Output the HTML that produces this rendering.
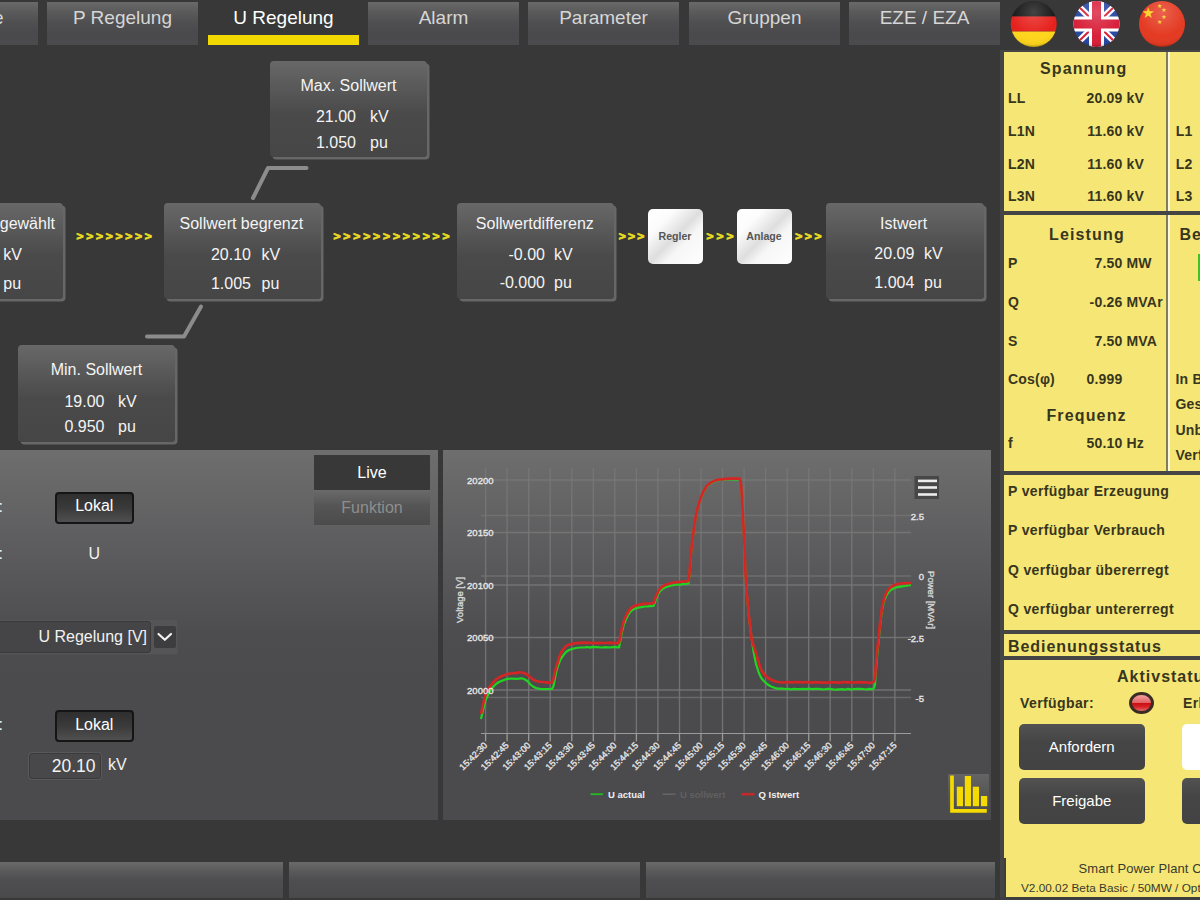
<!DOCTYPE html>
<html lang="de"><head><meta charset="utf-8"><title>U Regelung</title>
<style>
html,body{margin:0;padding:0}
body{width:1200px;height:900px;overflow:hidden;position:relative;background:#383838;font-family:"Liberation Sans",sans-serif;color:#f2f2f2}
.abs,.tab,.bx,.bx div,.arw,.arw span,.p,.p div,.btn,.y,.y div{position:absolute}
.tab{top:2px;width:151px;height:43px;line-height:32px;text-align:center;font-size:19px;color:#d6d6d6;background:linear-gradient(#696969,#5b5b5c 22%,#4f4f51 48%,#4a4a4c 72%,#4b4b4d)}
.tab.act{background:none;color:#fff}
.tab.act i{position:absolute;left:0;right:0;top:33px;height:10px;background:#f0d800}
.bx{border-radius:4px;background:linear-gradient(#686868,#4a4a4a 55%,#464646);box-shadow:2.5px 2.5px 0 #676767;font-size:16px;color:#f4f4f4;white-space:nowrap}
.bt{left:0;right:0;text-align:center;line-height:20px}
.bn,.bu{line-height:20px;font-size:16px}
.arw{left:0;height:16px;width:1000px;transform:scaleY(.85);transform-origin:0 8.6px}
.arw span{top:0;font-weight:bold;font-size:12px;line-height:16px;color:#e8da22;-webkit-text-stroke:.9px #e8da22}
.wb{position:absolute;width:55px;height:55px;border-radius:5px;background:linear-gradient(135deg,#fff 0%,#fcfcfc 25%,#dedede 50%,#f6f6f6 64%,#fff 100%);color:#555;font-weight:bold;font-size:10.6px;line-height:55px;text-align:center}
.p{background:linear-gradient(#6e6e6e,#5c5c5e 27%,#4d4d4f 50%,#4b4b4d 62%,#4b4b4d)}
.btn{border:2px solid #151515;border-radius:4px;background:linear-gradient(#2f2f2f,#3a3a3a 50%,#505050);color:#fff;font-size:16px;text-align:center;box-sizing:border-box}
.y{color:#38361c;font-weight:bold;font-size:14px;white-space:nowrap;letter-spacing:.2px}
.y .h{font-size:16px;letter-spacing:1.15px}
.y .r{text-align:right}
.dk{position:absolute;background:#454545}
.db{position:absolute;border-radius:5px;background:linear-gradient(#525252,#454545 40%,#434343);color:#fff;font-size:15px;text-align:center}
</style></head><body>
<div class="tab" style="left:-114px;text-align:right;width:117.5px;padding-right:34.3px">Zentrale</div><div class="tab" style="left:47px">P Regelung</div><div class="tab act" style="left:208px">U Regelung<i></i></div><div class="tab" style="left:368px">Alarm</div><div class="tab" style="left:528px">Parameter</div><div class="tab" style="left:689px">Gruppen</div><div class="tab" style="left:849px">EZE / EZA</div>
<!-- flags -->
<svg class="abs" style="left:1004px;top:0" width="196" height="50" viewBox="1004 0 196 50">
<defs>
<clipPath id="c1"><circle cx="1033.7" cy="24" r="23"/></clipPath>
<clipPath id="c2"><circle cx="1096.5" cy="24" r="23"/></clipPath>
<clipPath id="c3"><circle cx="1162" cy="24" r="23"/></clipPath>
<radialGradient id="gl" cx=".5" cy=".25" r=".75"><stop offset="0" stop-color="#fff" stop-opacity=".2"/><stop offset=".7" stop-color="#fff" stop-opacity="0"/><stop offset=".93" stop-color="#000" stop-opacity=".05"/><stop offset="1" stop-color="#000" stop-opacity=".3"/></radialGradient>
</defs>
<g clip-path="url(#c1)"><rect x="1010" y="0" width="48" height="16.5" fill="#151515"/><rect x="1010" y="16.5" width="48" height="15" fill="#e6201c"/><rect x="1010" y="31.5" width="48" height="17" fill="#ffd61c"/></g>
<circle cx="1033.7" cy="24" r="23" fill="url(#gl)"/>
<g clip-path="url(#c2)"><rect x="1073" y="0" width="48" height="48" fill="#2848a4"/>
<path d="M1073 1 L1120 47 M1120 1 L1073 47" stroke="#fff" stroke-width="6.5"/>
<path d="M1073 1 L1120 47 M1120 1 L1073 47" stroke="#d8203a" stroke-width="2"/>
<path d="M1096.5 0 V48 M1073 24 H1120" stroke="#fff" stroke-width="15"/>
<path d="M1096.5 0 V48 M1073 24 H1120" stroke="#d8203a" stroke-width="9"/></g>
<circle cx="1096.5" cy="24" r="23" fill="url(#gl)"/>
<g clip-path="url(#c3)"><rect x="1139" y="0" width="48" height="48" fill="#e43a22"/>
<text x="1148.3" y="18" text-anchor="middle" font-size="15" fill="#f8d020" font-family="DejaVu Sans,sans-serif">★</text>
<text x="1159.7" y="7.5" text-anchor="middle" font-size="6" fill="#f8d020" font-family="DejaVu Sans,sans-serif">★</text>
<text x="1164" y="12.2" text-anchor="middle" font-size="6" fill="#f8d020" font-family="DejaVu Sans,sans-serif">★</text>
<text x="1164" y="18.9" text-anchor="middle" font-size="6" fill="#f8d020" font-family="DejaVu Sans,sans-serif">★</text>
<text x="1159.7" y="23.5" text-anchor="middle" font-size="6" fill="#f8d020" font-family="DejaVu Sans,sans-serif">★</text></g>
<circle cx="1162" cy="24" r="23" fill="url(#gl)"/>
</svg>

<!-- diagram -->
<svg class="abs" style="left:0;top:0" width="1000" height="450"><path d="M306.5 168 H268 L253 198" fill="none" stroke="#8c8c8c" stroke-width="4" stroke-linecap="round" stroke-linejoin="round"/><path d="M201 306.5 L184 336.5 H147" fill="none" stroke="#8c8c8c" stroke-width="4" stroke-linecap="round" stroke-linejoin="round"/></svg>
<div class="bx" style="left:270px;top:61px;width:157px;height:96px">
<div class="bt" style="top:14.600000000000001px;left:0px;right:0px">Max. Sollwert</div>
<div class="bn" style="top:46.3px;right:71px">21.00</div><div class="bu" style="top:46.3px;left:100px">kV</div>
<div class="bn" style="top:72.1px;right:71px">1.050</div><div class="bu" style="top:72.1px;left:100px">pu</div>
</div>
<div class="bx" style="left:-95px;top:203px;width:157.5px;height:96px">
<div class="bt" style="top:11.3px;left:0px;right:0px">Sollwert ausgewählt</div>
<div class="bn" style="top:42px;right:71.5px">20.10</div><div class="bu" style="top:42px;left:98.3px">kV</div>
<div class="bn" style="top:70.5px;right:71.5px">1.005</div><div class="bu" style="top:70.5px;left:98.3px">pu</div>
</div>
<div class="bx" style="left:164px;top:203px;width:157px;height:96px">
<div class="bt" style="top:10.8px;left:-1.2px;right:1.2px">Sollwert begrenzt</div>
<div class="bn" style="top:42px;right:70px">20.10</div><div class="bu" style="top:42px;left:97.6px">kV</div>
<div class="bn" style="top:70.5px;right:70px">1.005</div><div class="bu" style="top:70.5px;left:97.6px">pu</div>
</div>
<div class="bx" style="left:457px;top:203px;width:157px;height:96px">
<div class="bt" style="top:11px;left:-0.7px;right:0.7px">Sollwertdifferenz</div>
<div class="bn" style="top:42px;right:69px">-0.00</div><div class="bu" style="top:42px;left:97px">kV</div>
<div class="bn" style="top:70.4px;right:69px">-0.000</div><div class="bu" style="top:70.4px;left:97px">pu</div>
</div>
<div class="bx" style="left:826px;top:203px;width:157.5px;height:96px">
<div class="bt" style="top:10.899999999999999px;left:-1.2px;right:1.2px">Istwert</div>
<div class="bn" style="top:41px;right:69.1px">20.09</div><div class="bu" style="top:41px;left:98px">kV</div>
<div class="bn" style="top:69.6px;right:69.1px">1.004</div><div class="bu" style="top:69.6px;left:98px">pu</div>
</div>
<div class="bx" style="left:18px;top:345px;width:157px;height:96.5px">
<div class="bt" style="top:14.8px;left:0px;right:0px">Min. Sollwert</div>
<div class="bn" style="top:47.2px;right:70.5px">19.00</div><div class="bu" style="top:47.2px;left:100px">kV</div>
<div class="bn" style="top:72.2px;right:70.5px">0.950</div><div class="bu" style="top:72.2px;left:100px">pu</div>
</div>
<div class="arw" style="top:229px"><span style="left:76.6px">&gt;</span><span style="left:86.3px">&gt;</span><span style="left:96.1px">&gt;</span><span style="left:105.8px">&gt;</span><span style="left:115.6px">&gt;</span><span style="left:125.3px">&gt;</span><span style="left:135.1px">&gt;</span><span style="left:144.8px">&gt;</span></div>
<div class="arw" style="top:229px"><span style="left:333.4px">&gt;</span><span style="left:343.3px">&gt;</span><span style="left:353.2px">&gt;</span><span style="left:363.2px">&gt;</span><span style="left:373.1px">&gt;</span><span style="left:383.0px">&gt;</span><span style="left:392.9px">&gt;</span><span style="left:402.8px">&gt;</span><span style="left:412.7px">&gt;</span><span style="left:422.7px">&gt;</span><span style="left:432.6px">&gt;</span><span style="left:442.5px">&gt;</span></div>
<div class="arw" style="top:229px"><span style="left:618.8px">&gt;</span><span style="left:628.0px">&gt;</span><span style="left:637.2px">&gt;</span></div>
<div class="arw" style="top:229px"><span style="left:706.4px">&gt;</span><span style="left:716.4px">&gt;</span><span style="left:726.4px">&gt;</span></div>
<div class="arw" style="top:229px"><span style="left:795.2px">&gt;</span><span style="left:804.8px">&gt;</span><span style="left:814.4px">&gt;</span></div>
<div class="wb" style="left:647.5px;top:209px">Regler</div>
<div class="wb" style="left:736.5px;top:209px">Anlage</div>

<!-- lower-left panel -->
<div class="p" style="left:0;top:450px;width:437.5px;height:370px">
<div style="left:314px;top:5px;width:116px;height:34.5px;background:#383838;color:#fff;font-size:16px;line-height:36px;text-align:center">Live</div>
<div style="left:314px;top:40px;width:116px;height:34.5px;background:linear-gradient(#6a6a6a,#555 45%,#4b4b4b);color:#8e8e8e;font-size:16px;line-height:35px;text-align:center">Funktion</div>
<div style="left:-78.9px;top:47.3px;font-size:16px;line-height:20px">Betriebsart:</div>
<div class="btn" style="left:55px;top:41.5px;width:78.5px;height:32px;line-height:24.5px">Lokal</div>
<div style="left:-85.1px;top:94px;font-size:16px;line-height:20px">Regelgröße:</div>
<div style="left:84.4px;top:94px;width:20px;text-align:center;font-size:16px;line-height:20px">U</div>
<div style="left:-20px;top:169.5px;width:197px;height:34.5px;background:#555557;box-shadow:0 0 0 1px #505052"></div>
<div style="left:-20px;top:171px;width:171px;height:32px;box-sizing:border-box;border:1px solid #3a3a3a;border-radius:3px;background:#454547;font-size:16px;line-height:30px;text-align:right;padding-right:3px">U Regelung [V]</div>
<div style="left:154px;top:176px;width:21.5px;height:21.5px;background:#3d3d3f;border-radius:2px"></div>
<svg class="abs" style="left:154px;top:176px" width="22" height="22"><path d="M4.5 8 L10.8 13.8 L17 8" fill="none" stroke="#f2f2f2" stroke-width="2.2" stroke-linecap="round" stroke-linejoin="round"/></svg>
<div style="left:-101.2px;top:265.4px;font-size:16px;line-height:20px">Sollwertquelle:</div>
<div class="btn" style="left:55px;top:260px;width:78.5px;height:32px;line-height:26px">Lokal</div>
<div style="left:29px;top:303px;width:72px;height:26px;box-sizing:border-box;border:1px solid #3b3b3b;border-radius:3px;background:#48484a;font-size:17.5px;line-height:24.5px;text-align:right;padding-right:4.5px;box-shadow:0 0 0 1px #58585a">20.10</div>
<div style="left:108px;top:305px;font-size:16px;line-height:20px">kV</div>
</div>

<!-- chart panel -->
<div class="p" style="left:443px;top:450px;width:548px;height:370px"></div>
<svg class="abs" style="left:443px;top:450px" width="548" height="370" viewBox="0 0 548 370">
<style>.ct{font:bold 9.5px "Liberation Sans",sans-serif;fill:#e4e4e4}.cl{font:9.5px "Liberation Sans",sans-serif;fill:#e6e6e6;stroke:#e6e6e6;stroke-width:.35px}</style>
<line x1="42.6" y1="18" x2="42.6" y2="283.5" stroke="#787878" stroke-width="1.4" opacity=".85"/><line x1="42.6" y1="283.5" x2="42.6" y2="291.3" stroke="#9a9a9a" stroke-width="1.3"/><line x1="64.1" y1="18" x2="64.1" y2="283.5" stroke="#787878" stroke-width="1.4" opacity=".85"/><line x1="64.1" y1="283.5" x2="64.1" y2="291.3" stroke="#9a9a9a" stroke-width="1.3"/><line x1="85.7" y1="18" x2="85.7" y2="283.5" stroke="#787878" stroke-width="1.4" opacity=".85"/><line x1="85.7" y1="283.5" x2="85.7" y2="291.3" stroke="#9a9a9a" stroke-width="1.3"/><line x1="107.2" y1="18" x2="107.2" y2="283.5" stroke="#787878" stroke-width="1.4" opacity=".85"/><line x1="107.2" y1="283.5" x2="107.2" y2="291.3" stroke="#9a9a9a" stroke-width="1.3"/><line x1="128.8" y1="18" x2="128.8" y2="283.5" stroke="#787878" stroke-width="1.4" opacity=".85"/><line x1="128.8" y1="283.5" x2="128.8" y2="291.3" stroke="#9a9a9a" stroke-width="1.3"/><line x1="150.3" y1="18" x2="150.3" y2="283.5" stroke="#787878" stroke-width="1.4" opacity=".85"/><line x1="150.3" y1="283.5" x2="150.3" y2="291.3" stroke="#9a9a9a" stroke-width="1.3"/><line x1="171.8" y1="18" x2="171.8" y2="283.5" stroke="#787878" stroke-width="1.4" opacity=".85"/><line x1="171.8" y1="283.5" x2="171.8" y2="291.3" stroke="#9a9a9a" stroke-width="1.3"/><line x1="193.4" y1="18" x2="193.4" y2="283.5" stroke="#787878" stroke-width="1.4" opacity=".85"/><line x1="193.4" y1="283.5" x2="193.4" y2="291.3" stroke="#9a9a9a" stroke-width="1.3"/><line x1="214.9" y1="18" x2="214.9" y2="283.5" stroke="#787878" stroke-width="1.4" opacity=".85"/><line x1="214.9" y1="283.5" x2="214.9" y2="291.3" stroke="#9a9a9a" stroke-width="1.3"/><line x1="236.5" y1="18" x2="236.5" y2="283.5" stroke="#787878" stroke-width="1.4" opacity=".85"/><line x1="236.5" y1="283.5" x2="236.5" y2="291.3" stroke="#9a9a9a" stroke-width="1.3"/><line x1="258.0" y1="18" x2="258.0" y2="283.5" stroke="#787878" stroke-width="1.4" opacity=".85"/><line x1="258.0" y1="283.5" x2="258.0" y2="291.3" stroke="#9a9a9a" stroke-width="1.3"/><line x1="279.5" y1="18" x2="279.5" y2="283.5" stroke="#787878" stroke-width="1.4" opacity=".85"/><line x1="279.5" y1="283.5" x2="279.5" y2="291.3" stroke="#9a9a9a" stroke-width="1.3"/><line x1="301.1" y1="18" x2="301.1" y2="283.5" stroke="#787878" stroke-width="1.4" opacity=".85"/><line x1="301.1" y1="283.5" x2="301.1" y2="291.3" stroke="#9a9a9a" stroke-width="1.3"/><line x1="322.6" y1="18" x2="322.6" y2="283.5" stroke="#787878" stroke-width="1.4" opacity=".85"/><line x1="322.6" y1="283.5" x2="322.6" y2="291.3" stroke="#9a9a9a" stroke-width="1.3"/><line x1="344.2" y1="18" x2="344.2" y2="283.5" stroke="#787878" stroke-width="1.4" opacity=".85"/><line x1="344.2" y1="283.5" x2="344.2" y2="291.3" stroke="#9a9a9a" stroke-width="1.3"/><line x1="365.7" y1="18" x2="365.7" y2="283.5" stroke="#787878" stroke-width="1.4" opacity=".85"/><line x1="365.7" y1="283.5" x2="365.7" y2="291.3" stroke="#9a9a9a" stroke-width="1.3"/><line x1="387.2" y1="18" x2="387.2" y2="283.5" stroke="#787878" stroke-width="1.4" opacity=".85"/><line x1="387.2" y1="283.5" x2="387.2" y2="291.3" stroke="#9a9a9a" stroke-width="1.3"/><line x1="408.8" y1="18" x2="408.8" y2="283.5" stroke="#787878" stroke-width="1.4" opacity=".85"/><line x1="408.8" y1="283.5" x2="408.8" y2="291.3" stroke="#9a9a9a" stroke-width="1.3"/><line x1="430.3" y1="18" x2="430.3" y2="283.5" stroke="#787878" stroke-width="1.4" opacity=".85"/><line x1="430.3" y1="283.5" x2="430.3" y2="291.3" stroke="#9a9a9a" stroke-width="1.3"/><line x1="451.9" y1="18" x2="451.9" y2="283.5" stroke="#787878" stroke-width="1.4" opacity=".85"/><line x1="451.9" y1="283.5" x2="451.9" y2="291.3" stroke="#9a9a9a" stroke-width="1.3"/><line x1="38" y1="30.0" x2="468" y2="30.0" stroke="#787878" stroke-width="1.4" opacity=".85"/><line x1="38" y1="82.5" x2="468" y2="82.5" stroke="#787878" stroke-width="1.4" opacity=".85"/><line x1="38" y1="135.0" x2="468" y2="135.0" stroke="#787878" stroke-width="1.4" opacity=".85"/><line x1="38" y1="187.5" x2="468" y2="187.5" stroke="#787878" stroke-width="1.4" opacity=".85"/><line x1="38" y1="240.0" x2="468" y2="240.0" stroke="#787878" stroke-width="1.4" opacity=".85"/><line x1="38" y1="65.5" x2="468" y2="65.5" stroke="#777" stroke-width="1.4" opacity=".7"/><line x1="38" y1="126.0" x2="468" y2="126.0" stroke="#777" stroke-width="1.4" opacity=".7"/><line x1="38" y1="247.5" x2="468" y2="247.5" stroke="#777" stroke-width="1.4" opacity=".7"/><line x1="38" y1="283.5" x2="468" y2="283.5" stroke="#9a9a9a" stroke-width="1.2"/>
<path d="M38.0 269.0 L40.0 260.0 L42.5 250.5 L45.0 245.0 L47.0 241.0 L50.0 237.0 L53.0 234.0 L56.0 232.0 L59.0 230.7 L64.7 228.8 L69.0 228.5 L73.0 228.8 L75.9 228.6 L78.7 228.3 L81.0 229.0 L84.5 231.0 L87.0 234.0 L90.0 236.5 L93.0 238.0 L97.0 238.8 L100.0 239.2 L103.0 239.2 L106.0 239.0 L109.0 239.0 L110.5 236.0 L112.0 228.0 L113.7 220.0 L116.0 213.0 L118.0 208.5 L120.5 205.0 L123.0 202.0 L126.0 200.0 L129.0 199.0 L133.0 198.0 L137.0 197.5 L139.5 197.5 L142.0 197.3 L144.5 197.0 L147.0 197.6 L149.5 196.9 L152.0 197.2 L154.5 197.0 L157.0 197.5 L159.5 197.5 L162.0 197.2 L164.5 197.3 L167.0 197.5 L169.5 197.1 L172.0 197.2 L176.0 197.5 L177.5 190.0 L179.0 181.7 L181.0 174.0 L183.7 167.7 L186.0 163.5 L188.3 160.7 L191.5 158.8 L195.3 157.6 L202.0 156.5 L204.8 156.4 L207.7 156.1 L210.5 156.0 L212.0 152.0 L214.0 146.7 L216.0 142.5 L218.7 139.7 L222.0 137.5 L225.7 136.2 L230.0 135.2 L232.5 134.6 L235.0 134.5 L237.5 134.6 L240.0 134.0 L242.8 134.0 L245.5 133.5 L246.5 125.0 L247.8 107.0 L249.5 90.0 L251.3 76.7 L253.0 66.0 L254.8 58.0 L257.5 49.0 L260.7 41.7 L264.0 36.5 L267.7 33.5 L272.0 31.3 L277.0 30.0 L279.5 29.5 L282.0 29.5 L284.6 29.5 L287.3 29.3 L290.4 29.3 L293.4 29.6 L296.5 29.2 L297.6 31.5 L298.3 38.5 L299.0 48.5 L300.3 73.5 L301.5 95.5 L302.5 125.7 L304.2 148.0 L306.0 167.7 L308.0 184.0 L310.7 202.5 L313.0 214.0 L315.7 222.5 L318.0 227.5 L320.7 231.0 L324.0 234.0 L327.0 236.0 L332.0 238.0 L334.5 238.6 L337.0 238.7 L339.5 238.6 L342.0 239.0 L345.0 238.9 L348.0 239.4 L351.0 238.8 L354.0 239.2 L357.0 239.1 L360.0 238.8 L363.0 239.2 L366.0 238.7 L369.0 239.1 L372.0 238.8 L375.0 238.8 L378.0 239.1 L381.0 239.5 L384.0 238.8 L387.0 238.9 L390.0 239.3 L393.0 239.6 L396.0 239.3 L399.0 239.1 L402.0 239.7 L405.0 238.7 L408.0 239.6 L411.0 239.0 L414.0 238.8 L417.0 238.8 L420.0 239.0 L423.0 239.5 L426.0 238.9 L429.5 239.2 L431.0 238.0 L432.0 235.0 L433.0 220.0 L434.2 205.0 L435.7 190.0 L437.3 174.0 L439.0 160.0 L441.3 150.0 L443.7 144.8 L447.0 140.5 L450.7 138.2 L454.0 137.2 L457.7 136.6 L462.0 136.0 L468.0 135.0" fill="none" stroke="#22d422" stroke-width="2.2" stroke-linejoin="round"/>
<path d="M38.0 264.0 L40.0 254.5 L42.5 244.7 L45.0 240.0 L47.0 236.5 L50.0 232.5 L53.0 229.5 L56.0 227.5 L59.0 226.0 L64.7 224.0 L71.0 223.0 L73.6 223.1 L76.1 222.4 L78.7 222.5 L81.5 223.3 L84.5 224.8 L87.0 227.0 L90.0 229.5 L93.0 231.0 L97.0 231.8 L100.0 232.0 L103.0 232.3 L106.0 232.6 L109.0 232.5 L110.5 229.0 L112.0 222.0 L113.7 215.5 L116.0 208.0 L118.0 202.7 L120.5 199.0 L123.0 196.0 L126.0 194.6 L129.0 193.8 L133.0 193.2 L137.0 192.9 L139.6 192.7 L142.2 192.9 L144.8 192.6 L147.4 193.0 L150.0 193.1 L152.6 192.9 L155.2 193.1 L157.8 192.8 L160.4 193.0 L163.0 193.0 L165.6 192.9 L168.2 192.9 L170.8 193.1 L173.4 193.2 L176.0 192.9 L177.5 186.0 L179.0 178.0 L181.0 170.5 L183.7 164.5 L186.0 160.5 L188.3 158.0 L191.5 156.0 L195.3 154.8 L202.0 153.7 L204.8 153.5 L207.7 153.5 L210.5 153.2 L212.0 149.0 L214.0 144.0 L216.0 140.0 L218.7 137.2 L222.0 135.0 L225.7 133.7 L230.0 132.7 L232.5 132.1 L235.0 132.0 L237.5 131.9 L240.0 131.5 L242.8 131.3 L245.5 131.0 L246.5 123.0 L247.8 105.0 L249.5 89.0 L251.3 76.0 L253.0 65.3 L254.8 57.3 L257.5 48.3 L260.7 41.0 L264.0 35.8 L267.7 32.8 L272.0 30.6 L277.0 29.3 L279.5 29.3 L282.0 28.8 L284.6 28.9 L287.3 28.6 L290.4 28.5 L293.4 28.6 L296.5 28.7 L297.6 31.0 L298.3 38.0 L299.0 48.0 L300.3 73.0 L301.5 95.0 L302.5 125.0 L304.2 147.5 L306.0 167.0 L308.0 183.5 L308.7 190.0 L310.3 195.0 L312.0 200.0 L314.0 207.0 L316.0 213.5 L318.0 219.5 L320.5 223.5 L323.0 226.3 L326.0 228.5 L329.0 230.2 L332.0 231.3 L335.0 232.0 L339.0 232.4 L341.7 232.5 L344.3 232.0 L347.0 232.3 L349.5 232.3 L352.0 232.1 L354.5 232.1 L357.0 232.1 L359.5 232.5 L362.0 232.1 L364.5 232.2 L367.0 232.3 L369.5 232.6 L372.0 232.1 L374.5 232.3 L377.0 232.4 L379.5 232.6 L382.0 232.6 L384.5 232.6 L387.0 232.3 L389.5 232.4 L392.0 232.3 L394.5 232.6 L397.0 232.7 L399.5 232.2 L402.0 232.2 L404.5 232.3 L407.0 232.3 L409.5 232.4 L412.0 232.5 L414.5 232.3 L417.0 232.2 L419.5 232.4 L422.0 232.4 L424.5 232.5 L427.0 232.8 L429.5 232.5 L431.0 231.5 L432.0 228.0 L433.0 214.0 L434.2 200.0 L435.7 186.0 L437.3 171.0 L439.0 157.5 L441.3 147.5 L443.7 142.0 L447.0 137.7 L450.7 135.3 L454.0 134.2 L457.7 133.6 L462.0 133.2 L465.0 133.2 L468.0 133.0" fill="none" stroke="#d42624" stroke-width="2.7" stroke-linejoin="round"/>
<text transform="translate(44.9 296) rotate(-45)" text-anchor="end" class="cl" style="font-size:9px">15:42:30</text><text transform="translate(66.4 296) rotate(-45)" text-anchor="end" class="cl" style="font-size:9px">15:42:45</text><text transform="translate(88.0 296) rotate(-45)" text-anchor="end" class="cl" style="font-size:9px">15:43:00</text><text transform="translate(109.5 296) rotate(-45)" text-anchor="end" class="cl" style="font-size:9px">15:43:15</text><text transform="translate(131.1 296) rotate(-45)" text-anchor="end" class="cl" style="font-size:9px">15:43:30</text><text transform="translate(152.6 296) rotate(-45)" text-anchor="end" class="cl" style="font-size:9px">15:43:45</text><text transform="translate(174.1 296) rotate(-45)" text-anchor="end" class="cl" style="font-size:9px">15:44:00</text><text transform="translate(195.7 296) rotate(-45)" text-anchor="end" class="cl" style="font-size:9px">15:44:15</text><text transform="translate(217.2 296) rotate(-45)" text-anchor="end" class="cl" style="font-size:9px">15:44:30</text><text transform="translate(238.8 296) rotate(-45)" text-anchor="end" class="cl" style="font-size:9px">15:44:45</text><text transform="translate(260.3 296) rotate(-45)" text-anchor="end" class="cl" style="font-size:9px">15:45:00</text><text transform="translate(281.8 296) rotate(-45)" text-anchor="end" class="cl" style="font-size:9px">15:45:15</text><text transform="translate(303.4 296) rotate(-45)" text-anchor="end" class="cl" style="font-size:9px">15:45:30</text><text transform="translate(324.9 296) rotate(-45)" text-anchor="end" class="cl" style="font-size:9px">15:45:45</text><text transform="translate(346.5 296) rotate(-45)" text-anchor="end" class="cl" style="font-size:9px">15:46:00</text><text transform="translate(368.0 296) rotate(-45)" text-anchor="end" class="cl" style="font-size:9px">15:46:15</text><text transform="translate(389.5 296) rotate(-45)" text-anchor="end" class="cl" style="font-size:9px">15:46:30</text><text transform="translate(411.1 296) rotate(-45)" text-anchor="end" class="cl" style="font-size:9px">15:46:45</text><text transform="translate(432.6 296) rotate(-45)" text-anchor="end" class="cl" style="font-size:9px">15:47:00</text><text transform="translate(454.2 296) rotate(-45)" text-anchor="end" class="cl" style="font-size:9px">15:47:15</text><text x="50.5" y="33.5" text-anchor="end" class="cl">20200</text><text x="50.5" y="86.0" text-anchor="end" class="cl">20150</text><text x="50.5" y="138.5" text-anchor="end" class="cl">20100</text><text x="50.5" y="191.0" text-anchor="end" class="cl">20050</text><text x="50.5" y="243.5" text-anchor="end" class="cl">20000</text><text x="481" y="69.5" text-anchor="end" class="cl">2.5</text><text x="481" y="129.5" text-anchor="end" class="cl">0</text><text x="481" y="191.5" text-anchor="end" class="cl">-2.5</text><text x="481" y="252.0" text-anchor="end" class="cl">-5</text>
<text transform="translate(20 150) rotate(-90)" text-anchor="middle" class="cl" style="fill:#d8d8d8;stroke:#d8d8d8">Voltage [V]</text>
<text transform="translate(484.5 150) rotate(90)" text-anchor="middle" class="cl" style="fill:#d8d8d8;stroke:#d8d8d8">Power [MVAr]</text>
<rect x="471.5" y="26" width="24.5" height="23" fill="#474747"/>
<rect x="475" y="29.6" width="19" height="2.6" fill="#ececec"/><rect x="475" y="36.2" width="19" height="2.6" fill="#ececec"/><rect x="475" y="43.2" width="19" height="2.6" fill="#ececec"/>
<line x1="147.5" y1="344.2" x2="160" y2="344.2" stroke="#25b525" stroke-width="1.9"/>
<text x="165" y="347.7" class="ct" style="fill:#f0f0f0">U actual</text>
<line x1="219.5" y1="344.2" x2="232.5" y2="344.2" stroke="#646464" stroke-width="1.6"/>
<text x="237" y="347.7" class="ct" style="fill:#606060">U sollwert</text>
<line x1="298" y1="344.2" x2="311.5" y2="344.2" stroke="#c42828" stroke-width="2.6"/>
<text x="315.5" y="347.7" class="ct" style="fill:#f0f0f0">Q Istwert</text>
</svg>
<div class="abs" style="left:948.3px;top:773.7px;width:41px;height:42px;background:linear-gradient(#646464,#565656 50%,#4b4b4b)"></div>
<svg class="abs" style="left:948px;top:773px" width="42" height="42" viewBox="948 773 42 42"><path d="M952 775.6 V810.9 H986.8" fill="none" stroke="#f4da00" stroke-width="3.7"/><rect x="956.8" y="786.7" width="6.2" height="19.5" fill="#f4da00"/><rect x="964.8" y="776" width="6.2" height="30.2" fill="#f4da00"/><rect x="972.8" y="786.7" width="6.2" height="19.5" fill="#f4da00"/><rect x="980.9" y="796" width="6.3" height="10.2" fill="#f4da00"/></svg>

<!-- bottom bars -->
<div class="abs" style="left:-10px;top:861.5px;width:293px;height:36px;background:linear-gradient(#6a6a6a,#5a5a5b 25%,#4e4e50 50%,#4a4a4c)"></div>
<div class="abs" style="left:288.5px;top:861.5px;width:351.5px;height:36px;background:linear-gradient(#6a6a6a,#5a5a5b 25%,#4e4e50 50%,#4a4a4c)"></div>
<div class="abs" style="left:645.5px;top:861.5px;width:349px;height:36px;background:linear-gradient(#6a6a6a,#5a5a5b 25%,#4e4e50 50%,#4a4a4c)"></div>

<!-- right yellow panel -->
<div class="abs" style="left:1000px;top:50px;width:200px;height:850px;background:#454545"></div>
<div class="y" style="left:1004px;top:52px;width:196px;height:848px;background:#f5e676">
<div class="h" style="left:35.9px;top:7px;line-height:20px">Spannung</div>
<div style="left:4px;top:38px;line-height:16px">LL</div><div class="r" style="right:77.5px;top:38px;line-height:16px">20.09</div><div style="left:122.5px;top:38px;line-height:16px">kV</div>
<div style="left:4px;top:71px;line-height:16px">L1N</div><div class="r" style="right:77.5px;top:71px;line-height:16px">11.60</div><div style="left:122.5px;top:71px;line-height:16px">kV</div>
<div style="left:4px;top:104px;line-height:16px">L2N</div><div class="r" style="right:77.5px;top:104px;line-height:16px">11.60</div><div style="left:122.5px;top:104px;line-height:16px">kV</div>
<div style="left:4px;top:136px;line-height:16px">L3N</div><div class="r" style="right:77.5px;top:136px;line-height:16px">11.60</div><div style="left:122.5px;top:136px;line-height:16px">kV</div>
<div style="left:171.7px;top:71px;line-height:16px">L1</div><div style="left:171.7px;top:104px;line-height:16px">L2</div><div style="left:171.7px;top:136px;line-height:16px">L3</div>

<div class="h" style="left:45px;top:173px;line-height:20px">Leistung</div>
<div class="h" style="left:175.5px;top:173px;line-height:20px;letter-spacing:1px">Betrieb</div>
<div style="left:194px;top:202px;width:10px;height:27px;background:#3fc41f"></div>
<div style="left:4px;top:202.5px;line-height:16px">P</div><div class="r" style="right:77.5px;top:202.5px;line-height:16px">7.50</div><div style="left:122.5px;top:202.5px;line-height:16px">MW</div>
<div style="left:4px;top:242px;line-height:16px">Q</div><div class="r" style="right:77.5px;top:242px;line-height:16px">-0.26</div><div style="left:122.5px;top:242px;line-height:16px">MVAr</div>
<div style="left:4px;top:281px;line-height:16px">S</div><div class="r" style="right:77.5px;top:281px;line-height:16px">7.50</div><div style="left:122.5px;top:281px;line-height:16px">MVA</div>
<div style="left:4px;top:319px;line-height:16px">Cos(φ)</div><div class="r" style="right:77.5px;top:319px;line-height:16px">0.999</div>
<div class="h" style="left:42.4px;top:353.5px;line-height:20px">Frequenz</div>
<div style="left:4px;top:383px;line-height:16px">f</div><div class="r" style="right:77.5px;top:383px;line-height:16px">50.10</div><div style="left:122.5px;top:383px;line-height:16px">Hz</div>
<div style="left:171.5px;top:319px;line-height:16px">In Betrieb</div>
<div style="left:171.5px;top:344px;line-height:16px">Gestört</div>
<div style="left:171.5px;top:369.5px;line-height:16px">Unbekannt</div>
<div style="left:171.5px;top:394.5px;line-height:16px">Verfügbar</div>

<div style="left:4px;top:430.5px;line-height:16px;letter-spacing:.35px">P verfügbar Erzeugung</div>
<div style="left:4px;top:470px;line-height:16px;letter-spacing:.35px">P verfügbar Verbrauch</div>
<div style="left:4px;top:510px;line-height:16px;letter-spacing:.35px">Q verfügbar übererregt</div>
<div style="left:4px;top:549px;line-height:16px;letter-spacing:.35px">Q verfügbar untererregt</div>
<div class="h" style="left:4px;top:585px;line-height:20px;letter-spacing:.95px">Bedienungsstatus</div>
<div class="h" style="left:113px;top:614.5px;line-height:20px;letter-spacing:1px">Aktivstatus</div>
<div style="left:16px;top:643px;line-height:16px;letter-spacing:.4px">Verfügbar:</div>
<div style="left:179px;top:643px;line-height:16px;letter-spacing:.4px">Erlaubt:</div>
<div style="left:125px;top:639.7px;width:25.2px;height:22.4px;border-radius:50%;box-sizing:border-box;border:3px solid #3a2c22;background:linear-gradient(#f6a2a4 0%,#ea7e80 25%,#e06466 48%,#cc0e10 53%,#d62428 75%,#e66a6a 100%)"></div>
<div class="db" style="left:15px;top:672px;width:125.5px;height:46px;line-height:46px;font-weight:normal;letter-spacing:0">Anfordern</div>
<div class="db" style="left:15px;top:726px;width:125.5px;height:46px;line-height:46px;font-weight:normal;letter-spacing:0">Freigabe</div>
<div style="left:178px;top:672px;width:60px;height:46px;border-radius:5px;background:#fff"></div>
<div class="db" style="left:178px;top:726px;width:60px;height:46px"></div>
<div style="left:74.5px;top:808.5px;line-height:16px;font-weight:normal;font-size:13px;letter-spacing:.1px;color:#3a3a2a">Smart Power Plant Controller</div>
<div style="left:17px;top:828.5px;line-height:14px;font-weight:normal;font-size:11.8px;letter-spacing:0;color:#3a3a2a">V2.00.02 Beta Basic / 50MW / Option</div>
</div>
<!-- yellow panel dividers -->
<div class="abs" style="left:1000px;top:897.3px;width:200px;height:3px;background:#3f3f3f"></div><div class="abs" style="left:1004px;top:857.5px;width:1.5px;height:40px;background:#3f3f3f"></div>
<div class="abs" style="left:1166px;top:52px;width:2.4px;height:420px;background:#807d58"></div><div class="abs" style="left:1168.4px;top:52px;width:1.5px;height:420px;background:#fdf9de"></div>
<div class="dk" style="left:1004px;top:211px;width:196px;height:3.8px"></div>
<div class="dk" style="left:1004px;top:471.4px;width:196px;height:3.8px"></div>
<div class="dk" style="left:1004px;top:630.3px;width:196px;height:3.8px"></div>
<div class="dk" style="left:1004px;top:656.4px;width:196px;height:3.8px"></div>
</body></html>
